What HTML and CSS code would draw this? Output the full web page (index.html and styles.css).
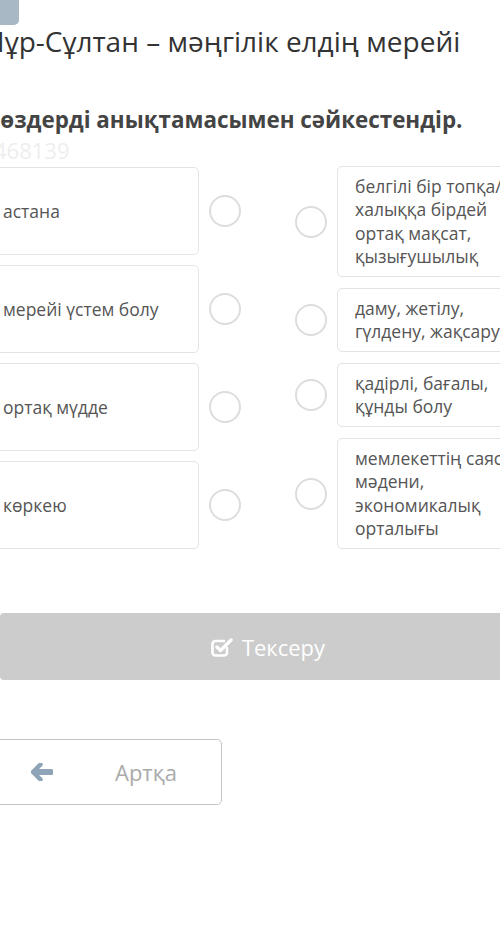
FILE: index.html
```html
<!DOCTYPE html>
<html lang="kk">
<head>
  <meta charset="UTF-8">
  <meta name="viewport" content="width=device-width, initial-scale=1.0">
  <title>Нұр-Сұлтан – мәңгілік елдің мерейі</title>
  <link rel="stylesheet" href="styles.css">
</head>
<body>
  <div class="page">
    <div class="top-btn"></div>
    <h1 class="title">Нұр-Сұлтан – мәңгілік елдің мерейі</h1>
    <h2 class="task">Сөздерді анықтамасымен сәйкестендір.</h2>
    <div class="task-id">468139</div>

    <div class="match">
      <div class="col">
        <div class="row">
          <div class="card word">астана</div>
          <span class="dot"></span>
        </div>
        <div class="row">
          <div class="card word">мерейі үстем болу</div>
          <span class="dot"></span>
        </div>
        <div class="row">
          <div class="card word">ортақ мүдде</div>
          <span class="dot"></span>
        </div>
        <div class="row">
          <div class="card word">көркею</div>
          <span class="dot"></span>
        </div>
      </div>
      <div class="col">
        <div class="row">
          <span class="dot"></span>
          <div class="card def">белгілі бір топқа/<br>халыққа бірдей<br>ортақ мақсат,<br>қызығушылық</div>
        </div>
        <div class="row">
          <span class="dot"></span>
          <div class="card def">даму, жетілу,<br>гүлдену, жақсару</div>
        </div>
        <div class="row">
          <span class="dot"></span>
          <div class="card def">қадірлі, бағалы,<br>құнды болу</div>
        </div>
        <div class="row">
          <span class="dot"></span>
          <div class="card def">мемлекеттің саяси,<br>мәдени,<br>экономикалық<br>орталығы</div>
        </div>
      </div>
    </div>

    <button class="check-btn">
      <svg width="22" height="20" viewBox="0 0 22 20">
        <path d="M16 11v4.5a3 3 0 0 1-3 3H4.5a3 3 0 0 1-3-3V7a3 3 0 0 1 3-3H13" fill="none" stroke="#fff" stroke-width="2.6" stroke-linecap="round"/>
        <path d="M6 10l3.5 3.5L20 3" fill="none" stroke="#fff" stroke-width="3.4" stroke-linecap="round" stroke-linejoin="round"/>
      </svg>
      Тексеру
    </button>

    <button class="back-btn">
      <svg width="22" height="18" viewBox="0 0 22 18">
        <path d="M9.5 1.5L2 9l7.5 7.5" fill="none" stroke="#8fa4b6" stroke-width="4.5" stroke-linecap="round" stroke-linejoin="round"/>
        <path d="M4 9h16" fill="none" stroke="#8fa4b6" stroke-width="6" stroke-linecap="round"/>
      </svg>
      <span>Артқа</span>
    </button>
  </div>
</body>
</html>
```

FILE: styles.css
```css
body {
  margin: 0;
  background-color: #fff;
  font-family: 'Open Sans', 'Noto Sans', sans-serif;
  color: #333;
  overflow: hidden;
}
.page {
  width: 564px;
  margin-left: -14px;
}
.top-btn {
  width: 40px;
  height: 25px;
  margin-left: -7px;
  background-color: #a9b8c5;
  border-radius: 0 0 5px 5px;
}
.title {
  margin: -2px 0 0 -2px;
  font-size: 28px;
  font-weight: 400;
  line-height: 36px;
  color: #333;
}
.task {
  margin: 46px 0 0 0;
  font-size: 22.4px;
  font-weight: 700;
  line-height: 30px;
  color: #444;
}
.task-id {
  margin: 3px 0 0 8px;
  font-size: 22px;
  line-height: 24px;
  color: #eee;
}
.match {
  display: flex;
  gap: 54px;
  margin-top: 5px;
}
.col {
  display: flex;
  flex-direction: column;
  width: 255px;
}
.col:first-child {
  gap: 10px;
}
.col:last-child {
  gap: 11px;
  margin-top: -1px;
}
.row {
  display: flex;
  align-items: center;
  gap: 10px;
}
.card {
  box-sizing: border-box;
  width: 213px;
  flex-shrink: 0;
  border: 1px solid #e4e4e4;
  border-radius: 5px;
  background-color: #fff;
  font-size: 17.5px;
  color: #555;
}
.word {
  display: flex;
  align-items: center;
  height: 88px;
  padding: 0 16px;
}
.def {
  padding: 7.5px 17px;
  line-height: 23.5px;
  white-space: nowrap;
}
.dot {
  box-sizing: border-box;
  width: 32px;
  height: 32px;
  flex-shrink: 0;
  border: 2px solid #ddd;
  border-radius: 50%;
}
.check-btn {
  display: flex;
  align-items: center;
  justify-content: center;
  gap: 9px;
  width: 536px;
  height: 67px;
  margin: 64px 0 0 14px;
  border: 0;
  border-radius: 4px;
  background-color: #ccc;
  color: #fff;
  font-family: inherit;
  font-size: 22px;
}
.back-btn {
  display: flex;
  align-items: center;
  width: 236px;
  height: 66px;
  margin-top: 59px;
  padding: 0 0 0 44px;
  border: 1px solid #c4c4c4;
  border-radius: 5px;
  background-color: #fff;
  color: #aaa;
  font-family: inherit;
  font-size: 22px;
}
.back-btn span {
  margin-left: 62px;
}
```
